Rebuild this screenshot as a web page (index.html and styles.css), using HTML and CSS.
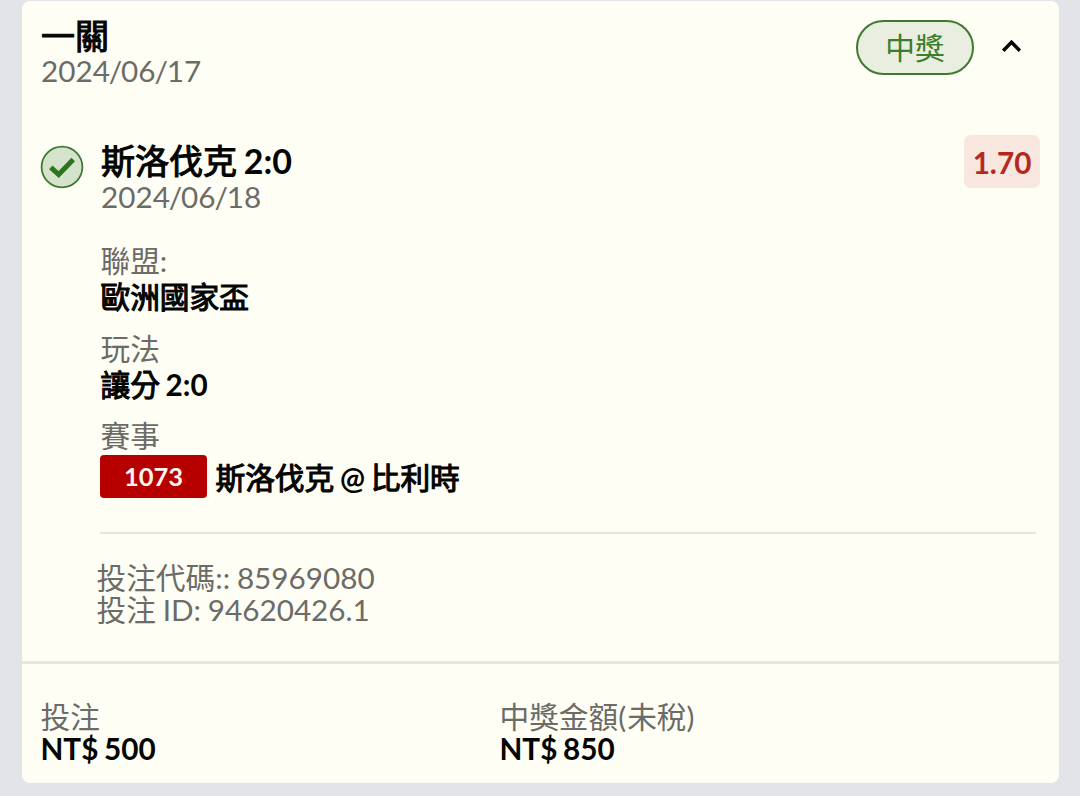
FILE: index.html
```html
<!DOCTYPE html>
<html lang="zh-Hant">
<head>
<meta charset="utf-8">
<title>投注</title>
<link rel="stylesheet" href="styles.css">
</head>
<body>
<main class="card">
  <header class="head">
    <div>
      <h1 class="title"><span class="han">一關</span></h1>
      <div class="date">2024<span class="slash">/</span>06<span class="slash">/</span>17</div>
    </div>
    <div class="head-side">
      <span class="pill">中獎</span>
      <svg class="chevron" width="24" height="18" viewBox="0 0 24 18"><path d="M3.2 13.7 11.5 5.2l8.3 8.5"/></svg>
    </div>
  </header>

  <section class="pick">
    <svg class="check" width="44" height="44" viewBox="0 0 44 44"><circle cx="22" cy="22" r="20.4"/><path d="M10.8 22.4 18.7 29.6 33.2 14.6"/></svg>
    <div class="pick-main">
      <h2 class="title"><span class="han">斯洛伐克</span> 2:0</h2>
      <div class="date">2024<span class="slash">/</span>06<span class="slash">/</span>18</div>
    </div>
    <span class="odds">1.70</span>
  </section>

  <section class="details">
    <div class="field"><div class="label">聯盟:</div><div class="value"><span class="han">歐洲國家盃</span></div></div>
    <div class="field"><div class="label">玩法</div><div class="value"><span class="han">讓分</span> 2:0</div></div>
    <div class="field"><div class="label">賽事</div>
      <div class="match"><span class="code">1073</span><span class="value teams"><span class="han">斯洛伐克</span> @ <span class="han">比利時</span></span></div>
    </div>
  </section>

  <section class="ids">
    <div>投注代碼:: 85969080</div>
    <div>投注 ID: 94620426.1</div>
  </section>

  <footer class="totals">
    <div><div class="total-label">投注</div><div class="amount">NT$ 500</div></div>
    <div><div class="total-label">中獎金額<span class="paren">(</span>未稅<span class="paren">)</span></div><div class="amount">NT$ 850</div></div>
  </footer>
</main>
</body>
</html>
```
FILE: styles.css
```css
* { box-sizing: border-box; margin: 0; }
body {
  height: 796px;
  overflow: hidden;
  padding: 1px 21px 0 22px;
  background: #e3e4e8;
  font-family: Lato, "Noto Sans CJK TC", sans-serif;
  font-size: 29.7px;
  color: #6b6b67;
}
.card {
  height: 782px;
  background: #fefef5;
  border-radius: 8px;
}
.head {
  display: flex;
  justify-content: space-between;
  height: 134px;
  padding: 17px 35px 0 19px;
}
.title {
  font-size: 34px;
  line-height: 35px;
  font-weight: 700;
  word-spacing: -1.5px;
  color: #040403;
}
.han { font-weight: 400; -webkit-text-stroke: 1.1px currentColor; }
.date { line-height: 36px; }
.slash { margin: 0 -1.1px; }
.head-side {
  display: flex;
  align-items: flex-start;
  gap: 26px;
  padding-top: 2px;
}
.pill {
  width: 118px;
  height: 55px;
  border: 2px solid #3d7a2e;
  border-radius: 28px;
  background: #eaeee0;
  color: #3a7d2a;
  line-height: 51px;
  text-align: center;
}
.chevron { margin-top: 17px; }
.chevron path { fill: none; stroke: #040403; stroke-width: 3.5; }
.pick {
  display: flex;
  align-items: flex-start;
  height: 107px;
  padding: 0 19px 0 18px;
}
.pick-main { flex: 1; padding: 8px 0 0 17px; }
.pick-main .title { line-height: 36px; }
.check { margin-top: 10px; }
.check circle { fill: #d6e3cb; stroke: #3d7a35; stroke-width: 1.8; }
.check path { fill: none; stroke: #2d751d; stroke-width: 5; }
.odds {
  width: 76px;
  height: 53px;
  border-radius: 7px;
  background: #f8e7df;
  color: #b5281f;
  font-weight: 700;
  line-height: 55px;
  text-align: center;
}
.details {
  height: 292px;
  margin: 0 23px 0 78px;
  border-bottom: 2px solid #e6e6df;
}
.field { height: 87.5px; }
.label { padding-left: 0.5px; line-height: 37px; }
.value {
  padding-left: 0.5px;
  line-height: 35.5px;
  font-weight: 700;
  word-spacing: -1.5px;
  color: #040403;
}
.match { display: flex; align-items: center; gap: 8px; height: 43px; margin-top: 1px; }
.teams { padding-top: 2px; }
.code {
  width: 107px;
  height: 43px;
  border-radius: 4px;
  background: #b60000;
  color: #fdf5ee;
  font-size: 25.5px;
  font-weight: 700;
  line-height: 43px;
  text-align: center;
}
.ids {
  height: 130px;
  padding: 28px 0 0 74.5px;
  line-height: 32px;
  word-spacing: -0.8px;
  border-bottom: 3px solid #e8e8e2;
}
.totals {
  display: grid;
  grid-template-columns: 459px 1fr;
  padding: 37px 19px 0 18.5px;
  line-height: 32px;
}
.paren { margin-right: 1px; }
.amount { font-weight: 700; word-spacing: -1.5px; color: #040403; }
```
